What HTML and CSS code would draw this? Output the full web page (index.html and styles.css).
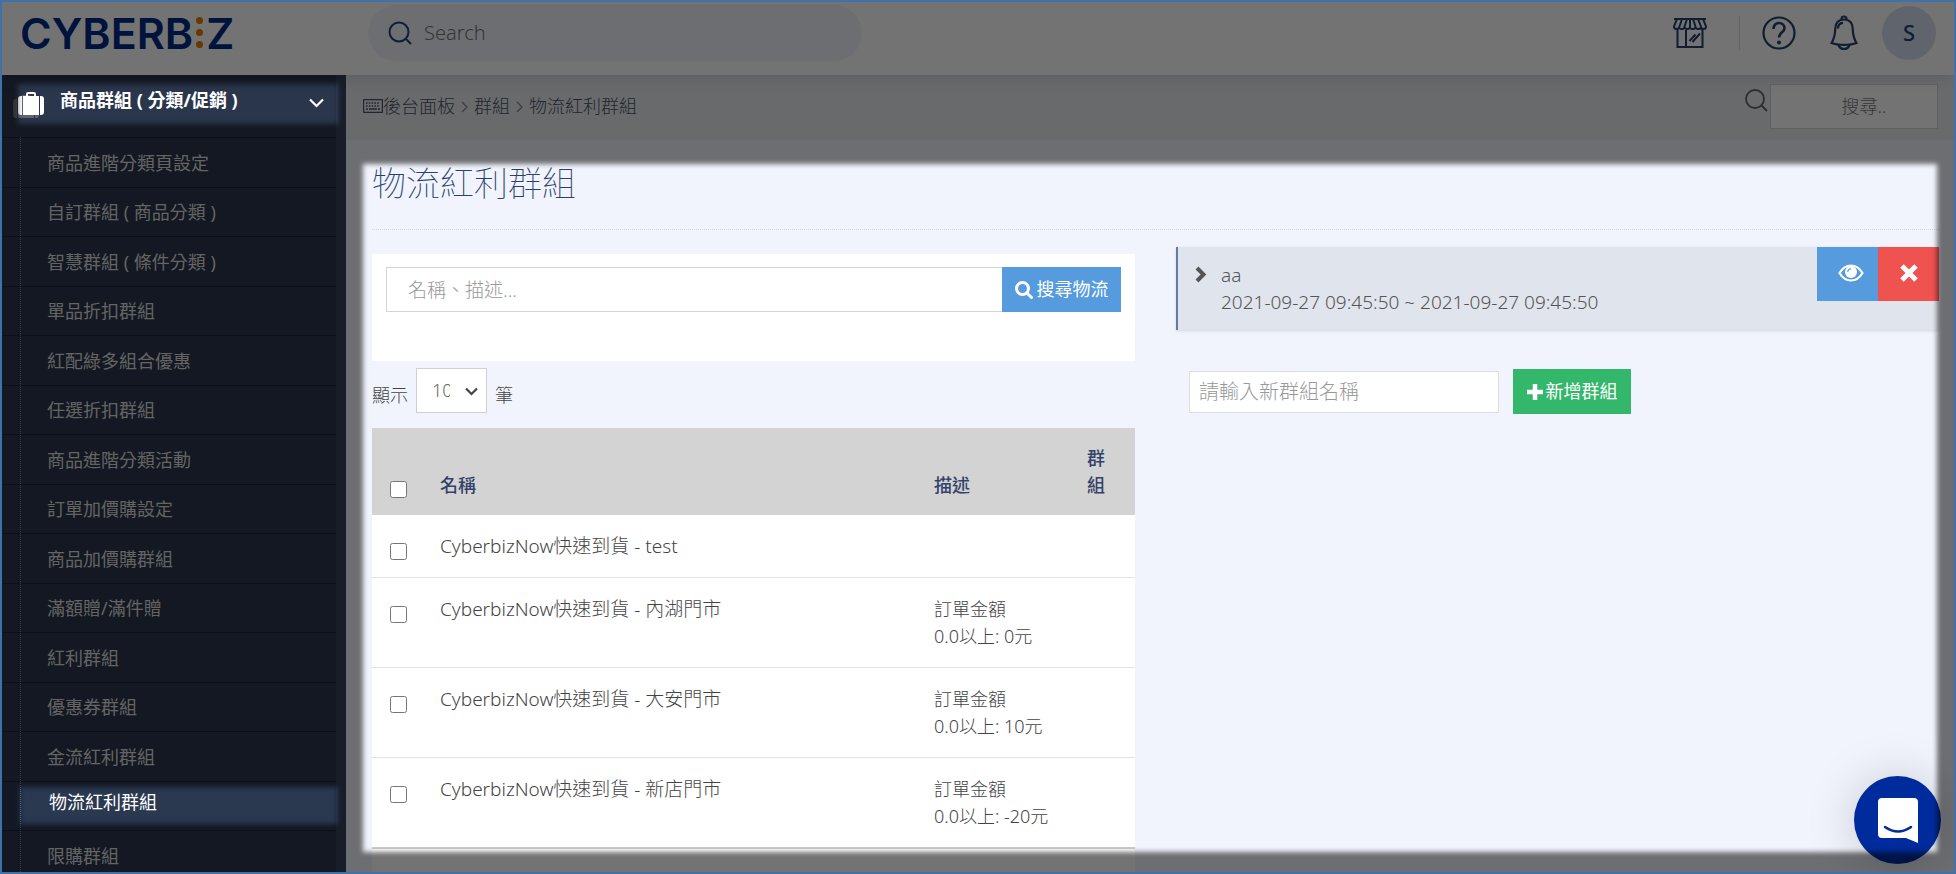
FILE: index.html
```html
<!DOCTYPE html>
<html lang="zh-Hant">
<head>
<meta charset="utf-8">
<title>物流紅利群組</title>
<link rel="stylesheet" href="styles.css">
</head>
<body>
<div class="app">
  <header class="topbar">
    <a class="logo" href="#" aria-label="CYBERBIZ"><span>CYBERB</span><span class="logo-dots"><i></i><i></i><i></i></span><span>Z</span></a>
    <label class="global-search">
      <svg width="24" height="24" viewBox="0 0 24 24" fill="none" stroke="currentColor" stroke-width="2"><circle cx="11" cy="11" r="9.5"/><path d="M17.500 17.500L23 23"/></svg>
      <input type="text" placeholder="Search" aria-label="Search">
    </label>
    <nav class="top-actions">
      <a class="store" href="#" aria-label="商店">
        <svg width="34" height="32" viewBox="0 0 34 32" fill="none" stroke="currentColor" stroke-width="2"><path d="M4 2h26l3 7.500q0 2.500-2.500 2.500T28 9.500q0 2.500-2.700 2.500t-2.800-2.500q0 2.500-2.800 2.500T17 9.500q0 2.500-2.700 2.500t-2.800-2.500Q11.500 12 8.700 12T6 9.500Q6 12 3.500 12T1 9.500zM9 2L6.500 9.500M14 2l-2.500 7.500M17 2v7.500M20 2l2.500 7.500M25 2l3 7.500M1 2h32M4.500 12v18h25V12M13 13v17"/><path d="M16.500 24l6-6.500M19.500 25l7.500-8.500"/></svg>
      </a>
      <span class="divider"></span>
      <a class="help" href="#" aria-label="說明">
        <svg width="34" height="36" viewBox="0 0 34 36" fill="none" stroke="currentColor" stroke-width="2.200"><circle cx="17" cy="18" r="15.500"/><path d="M11.500 14c0-4 2.500-6 5.500-6s5.500 2 5.500 5.300c0 4.200-5.500 4-5.500 9.200" stroke-width="2.600"/><circle cx="17" cy="27.500" r="2" fill="currentColor" stroke="none"/></svg>
      </a>
      <a class="bell" href="#" aria-label="通知">
        <svg width="28" height="36" viewBox="0 0 28 36" fill="none" stroke="currentColor" stroke-width="2.200"><path d="M14 4.500c5.500 0 8.500 3.500 8.700 9 .3 8.500 1.500 11 3.800 14.500-6 2.500-19 2.500-25 0 2.300-3.500 3.500-6 3.800-14.500.2-5.500 3.200-9 8.700-9z"/><path d="M8.500 30q1.500 4 5.500 4t5.500-4M11.500 4q0-2.500 2.500-2.500T16.500 4M8 13.500c0-3.500 2-5.500 5-5.700"/></svg>
      </a>
      <button class="avatar" type="button">S</button>
    </nav>
  </header>

  <div class="body">
    <aside class="sidebar">
      <button class="side-head" type="button">
        <svg class="case" width="26" height="23" viewBox="0 0 26 23"><path fill="currentColor" fill-rule="evenodd" d="M8 4V2q0-2 2-2h6q2 0 2 2v2h3v19H5V4zm2 0h6V2h-6zM4 4v19H3q-3 0-3-3V7q0-3 3-3zm18 0h1q3 0 3 3v13q0 3-3 3h-1z"/></svg>
        <span>商品群組 ( 分類/促銷 )</span>
        <svg class="caret" width="15" height="10" viewBox="0 0 15 10" fill="none" stroke="currentColor" stroke-width="2.200"><path d="M1 1.500l6.500 6.500L14 1.500"/></svg>
      </button>
      <ul class="side-list">
        <li><a href="#">商品進階分類頁設定</a></li>
        <li><a href="#">自訂群組 ( 商品分類 )</a></li>
        <li><a href="#">智慧群組 ( 條件分類 )</a></li>
        <li><a href="#">單品折扣群組</a></li>
        <li><a href="#">紅配綠多組合優惠</a></li>
        <li><a href="#">任選折扣群組</a></li>
        <li><a href="#">商品進階分類活動</a></li>
        <li><a href="#">訂單加價購設定</a></li>
        <li><a href="#">商品加價購群組</a></li>
        <li><a href="#">滿額贈/滿件贈</a></li>
        <li><a href="#">紅利群組</a></li>
        <li><a href="#">優惠券群組</a></li>
        <li><a href="#">金流紅利群組</a></li>
        <li class="active"><a href="#" aria-current="page">物流紅利群組</a></li>
        <li><a href="#">限購群組</a></li>
      </ul>
    </aside>

    <main class="main">
      <div class="crumb-bar">
        <nav class="crumbs">
          <svg width="20" height="14" viewBox="0 0 20 14" fill="none" stroke="currentColor"><rect x=".5" y=".5" width="19" height="13" rx="1" stroke-width="1.400"/><path d="M3 4h14M3 7h14" stroke-width="1.600" stroke-dasharray="1.600 1.200"/><path d="M3 10h2M6 10h8M15 10h2" stroke-width="1.600"/></svg>
          <a href="#">後台面板</a>
          <svg class="sep" width="7" height="12" viewBox="0 0 7 12" fill="none" stroke="currentColor" stroke-width="1.300"><path d="M1 1l5 5-5 5"/></svg>
          <a href="#">群組</a>
          <svg class="sep" width="7" height="12" viewBox="0 0 7 12" fill="none" stroke="currentColor" stroke-width="1.300"><path d="M1 1l5 5-5 5"/></svg>
          <span>物流紅利群組</span>
        </nav>
        <label class="page-search">
          <svg width="24" height="24" viewBox="0 0 24 24" fill="none" stroke="currentColor" stroke-width="1.800"><circle cx="11" cy="11" r="9"/><path d="M17.500 17.500L23 23"/></svg>
          <input type="text" placeholder="搜尋.." aria-label="搜尋">
        </label>
      </div>

      <div class="content">
        <h1>物流紅利群組</h1>
        <div class="columns">
          <section class="left">
            <form class="filter">
              <input type="text" placeholder="名稱、描述..." aria-label="名稱、描述">
              <button type="button"><svg width="18" height="18" viewBox="0 0 18 18" fill="none" stroke="currentColor" stroke-width="3"><circle cx="7.500" cy="7.500" r="6"/><path d="M12 12l4.500 4.500" stroke-linecap="round"/></svg>搜尋物流</button>
            </form>
            <div class="length">
              <label for="len">顯示</label>
              <span class="select"><select id="len"><option>10</option><option>25</option></select><svg width="13" height="9" viewBox="0 0 13 9" fill="none" stroke="currentColor" stroke-width="2.200"><path d="M1 1.500l5.500 5.500L12 1.500"/></svg></span>
              <span>筆</span>
            </div>
            <div class="table-wrap">
              <table>
                <colgroup><col class="c-check"><col><col class="c-desc"><col class="c-group"></colgroup>
                <thead>
                  <tr><th><input type="checkbox" aria-label="全選"></th><th>名稱</th><th>描述</th><th>群組</th></tr>
                </thead>
                <tbody>
                  <tr><td><input type="checkbox" aria-label="test"></td><td class="name">CyberbizNow快速到貨 - test</td><td></td><td></td></tr>
                  <tr><td><input type="checkbox" aria-label="內湖門市"></td><td class="name">CyberbizNow快速到貨 - 內湖門市</td><td>訂單金額<br>0.0以上: 0元</td><td></td></tr>
                  <tr><td><input type="checkbox" aria-label="大安門市"></td><td class="name">CyberbizNow快速到貨 - 大安門市</td><td>訂單金額<br>0.0以上: 10元</td><td></td></tr>
                  <tr><td><input type="checkbox" aria-label="新店門市"></td><td class="name">CyberbizNow快速到貨 - 新店門市</td><td>訂單金額<br>0.0以上: -20元</td><td></td></tr>
                </tbody>
              </table>
            </div>
          </section>

          <section class="right">
            <article class="group">
              <svg class="arrow" width="12" height="17" viewBox="0 0 12 17" fill="none" stroke="currentColor" stroke-width="4"><path d="M2 2l6.500 6.500L2 15"/></svg>
              <div class="group-text"><div>aa</div><div>2021-09-27 09:45:50 ~ 2021-09-27 09:45:50</div></div>
              <div class="group-actions">
                <button class="view" type="button" aria-label="檢視"><svg width="26" height="18" viewBox="0 0 26 18"><path d="M1.500 9Q6 1.500 13 1.500T24.500 9Q20 16.500 13 16.500T1.500 9z" fill="none" stroke="currentColor" stroke-width="2.200"/><circle cx="13" cy="8" r="6" fill="currentColor"/><path d="M9.800 8q0-3.200 3.200-3.200" fill="none" stroke="#559bdd" stroke-width="1.200"/></svg></button>
                <button class="remove" type="button" aria-label="刪除"><svg width="18" height="18" viewBox="0 0 18 18" stroke="currentColor" stroke-width="5"><path d="M2 2l14 14M16 2L2 16"/></svg></button>
              </div>
            </article>
            <form class="new-group">
              <input type="text" placeholder="請輸入新群組名稱" aria-label="新群組名稱">
              <button type="button"><svg width="16" height="16" viewBox="0 0 16 16" stroke="currentColor" stroke-width="4.500"><path d="M8 0v16M0 8h16"/></svg>新增群組</button>
            </form>
          </section>
        </div>
      </div>
    </main>
  </div>
</div>

<button class="chat" type="button" aria-label="客服">
  <svg width="40" height="46" viewBox="0 0 40 46"><path d="M4 1h32q4 0 4 4v41l-12-5H4q-4 0-4-4V5q0-4 4-4z" fill="#fff"/><path d="M7 30q13 9 26 0" fill="none" stroke="#002b9c" stroke-width="2.600" stroke-linecap="round"/></svg>
</button>

<svg class="tour" aria-hidden="true">
  <defs>
    <filter id="soft"><feGaussianBlur stdDeviation="2.500"/></filter>
    <mask id="holes">
      <rect width="100%" height="100%" fill="#fff"/>
      <g filter="url(#soft)">
        <rect class="hole-head"/>
        <rect class="hole-item"/>
        <rect class="hole-main"/>
      </g>
    </mask>
  </defs>
  <rect width="100%" height="100%" fill="#000" fill-opacity=".55" mask="url(#holes)"/>
</svg>
<div class="frame"></div>
</body>
</html>
```
FILE: styles.css
```css
* { box-sizing: border-box; }

body {
  margin: 0;
  font: 300 18px/27px "Noto Sans", "Noto Sans CJK TC", sans-serif;
  color: #444;
  background: #f1f4fc;
}

button, input, select { font: inherit; color: inherit; margin: 0; }
input, select { border-radius: 0; outline: 0; }
button { border: 0; padding: 0; background: none; cursor: pointer; }
a { color: inherit; text-decoration: none; }
svg { display: block; flex: none; }
::placeholder { color: #999; opacity: 1; }

.app { height: 100vh; display: flex; flex-direction: column; overflow: hidden; isolation: isolate; }

/* top bar */
.topbar {
  height: 75px;
  flex: none;
  display: flex;
  align-items: center;
  padding: 0 20px 10px;
  background: #fff;
  color: #27406e;
  box-shadow: 0 2px 16px rgba(0, 0, 0, .12);
  z-index: 1;
}
.logo {
  display: flex;
  align-items: center;
  gap: 3px;
  width: 348px;
  font: 600 43px/48px Inter, sans-serif;
  color: #002b86;
}
.logo-dots { display: flex; flex-direction: column; gap: 5px; }
.logo-dots i { width: 7px; height: 7px; border-radius: 50%; background: #e87a00; }
.global-search {
  display: flex;
  align-items: center;
  gap: 12px;
  width: 494px;
  height: 56px;
  padding: 0 20px;
  border-radius: 28px;
  background: #f1f4fc;
}
.global-search input { flex: 1; min-width: 0; border: 0; padding: 0; background: none; font-size: 20px; }
.global-search ::placeholder { color: #777; }
.top-actions { margin-left: auto; display: flex; align-items: center; }
.divider { width: 1px; height: 34px; margin: 0 22px 0 32px; background: #d5dbe8; }
.bell { margin: 0 24px 0 34px; }
.avatar { width: 54px; height: 54px; border-radius: 50%; background: #d5def2; font-size: 22px; font-weight: 500; }

.body { flex: 1; min-height: 0; display: flex; }

/* sidebar */
.sidebar { width: 346px; flex: none; overflow: hidden; padding-right: 10px; background: #35415c; color: #fff; }
.side-head {
  width: 100%;
  height: 62px;
  display: flex;
  align-items: center;
  padding: 0 12px 6px 18px;
  background: #2a364c;
  font-weight: 700;
}
.side-head span { margin-left: 16px; padding-bottom: 5px; }
.case { filter: drop-shadow(-5px 3px 0 #5f656e); }
.caret { margin-left: auto; }
.side-list { margin: 0; padding: 0; list-style: none; background: #2a364c; position: relative; }
.side-list::before { content: ""; position: absolute; left: 20px; top: 0; bottom: 0; border-left: 1px dotted #7a8496; }
.side-list li { height: 50px; border-top: 1px solid #1b2536; display: flex; align-items: center; }
.side-list li:nth-child(even) { height: 49px; }
.side-list a { padding: 1px 0 0 47px; color: #ddd; font-weight: 400; }
.side-list .active { background: #2a3850; }
.side-list .active a { padding: 0 0 8px 49px; color: #fff; }

/* page */
.main { flex: 1; min-width: 0; display: flex; flex-direction: column; }
.crumb-bar {
  height: 65px;
  flex: none;
  display: flex;
  align-items: center;
  justify-content: space-between;
  padding: 0 18px 3px 17px;
  background: #e9ebef;
  color: #4a5368;
}
.crumbs { display: flex; align-items: center; }
.sep { margin: 2px 6px 0; color: #888; }
.page-search { display: flex; gap: 2px; color: #666; }
.page-search svg { margin-top: 4px; }
.page-search input { width: 168px; height: 45px; border: 1px solid #d5d5d5; background: #fff; text-align: center; padding: 0 0 0 20px; }
.page-search ::placeholder { color: #777; }

.content { flex: 1; min-height: 0; display: flex; flex-direction: column; padding: 17px 17px 0 26px; }
h1 { margin: 0; height: 73px; padding-top: 6px; border-bottom: 1px dotted #d4d8e0; font-family: "Noto Sans CJK TC", sans-serif; font-weight: 100; font-size: 34px; line-height: 38px; color: #27406e; }
.columns { flex: 1; min-height: 0; display: grid; grid-template-columns: 1fr 1fr; gap: 41px; }
.left { display: flex; flex-direction: column; padding-top: 24px; min-height: 0; }

.filter { display: flex; height: 107px; padding: 13px 14px; align-items: flex-start; background: #fff; }
.filter input { flex: 1; min-width: 0; height: 45px; border: 1px solid #d5d5d5; border-right: 0; padding: 0 21px; font-size: 19px; }
.filter button { display: flex; align-items: center; justify-content: center; gap: 4px; width: 119px; height: 45px; background: #559bdd; color: #fff; font-weight: 400; }

.length { display: flex; align-items: center; gap: 8px; height: 67px; padding-bottom: 8px; }
.length > label, .length > span:last-child { padding-top: 9px; }
.select { position: relative; width: 71px; height: 45px; border: 1px solid #d0d0d0; background: #fff; }
.select select { appearance: none; width: 18px; height: 43px; margin-left: 15px; border: 0; padding: 0; background: none; color: #666; text-overflow: clip; overflow: hidden; }
.select svg { position: absolute; right: 8px; top: 18px; pointer-events: none; }

.table-wrap { flex: 1; min-height: 0; background: #fff; }
table { width: 100%; table-layout: fixed; border-collapse: collapse; }
.c-check { width: 51px; }
.c-desc { width: 153px; }
.c-group { width: 65px; }
th { padding: 17px 17px 16px; background: #d3d3d3; text-align: left; vertical-align: bottom; font-weight: 500; color: #33426a; }
td { padding: 18px 17px 17px; vertical-align: top; border-bottom: 1px solid #e3e3e3; }
.name { font-size: 19px; }
tr:last-child td { border-bottom: 2px solid #ccc; }
input[type="checkbox"] { display: block; width: 17px; height: 17px; margin: 10px 0 0 1px; }
th input[type="checkbox"] { margin: 0 0 1px 1px; }

.right { padding-top: 17px; }
.group { display: flex; align-items: flex-start; height: 83px; border-left: 2px solid #647ba5; background: #e0e4ec; box-shadow: 0 1px 3px rgba(0, 0, 0, .12); }
.arrow { margin: 19px 14px 0 17px; color: #555; }
.group-text { padding-top: 15px; color: #555; font-size: 19px; }
.group-actions { margin-left: auto; display: flex; }
.group-actions button { width: 61px; height: 54px; display: grid; place-items: center; padding-bottom: 2px; color: #fff; }
.group-actions .view { background: #559bdd; padding-left: 6px; }
.group-actions .remove { background: #ef5350; }
.new-group { display: flex; align-items: center; gap: 14px; padding: 39px 13px; }
.new-group input { width: 310px; height: 42px; border: 1px solid #ddd; padding: 0 9px; background: #fff; font-size: 20px; }
.new-group button { display: flex; align-items: center; justify-content: center; gap: 3px; width: 118px; height: 45px; background: #33b76a; color: #fff; font-weight: 400; }

/* floating layers */
.chat {
  position: fixed;
  right: 15px;
  bottom: 10px;
  width: 87px;
  height: 88px;
  border-radius: 50%;
  display: grid;
  place-items: center;
  background: #002b9c;
  box-shadow: 0 2px 50px rgba(0, 0, 0, .18);
}
.tour { position: fixed; inset: 0; width: 100%; height: 100%; pointer-events: none; }
.hole-head { x: 18px; y: 84px; width: 320px; height: 40px; }
.hole-item { x: 20px; y: 787px; width: 317px; height: 37px; }
.hole-main { x: 363px; y: 164px; width: calc(100% - 382px); height: calc(100% - 186px); }
.frame { position: fixed; inset: 0; border: 2px solid #3f72a8; pointer-events: none; }
```
